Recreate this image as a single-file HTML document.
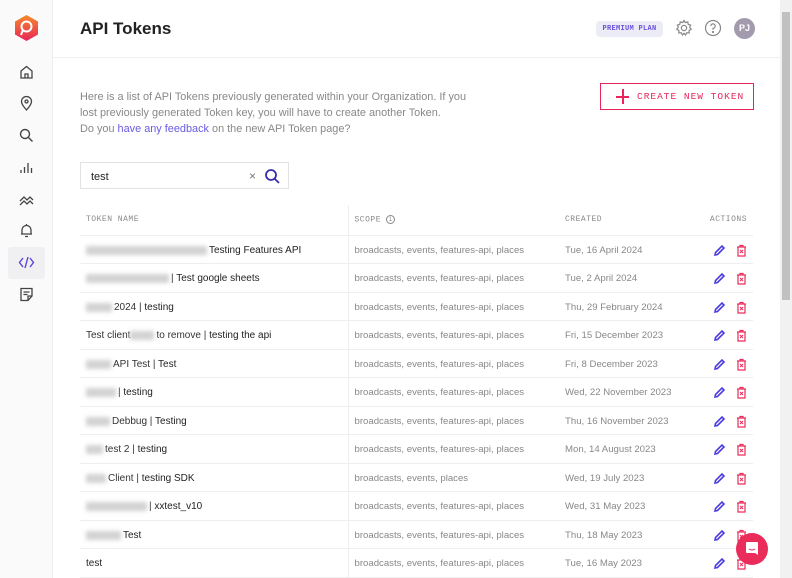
<!DOCTYPE html>
<html><head><style>
*{box-sizing:border-box;margin:0;padding:0}
body{width:792px;height:578px;overflow:hidden;font-family:"Liberation Sans",sans-serif;background:#fff;position:relative}
.side{position:absolute;left:0;top:0;width:53px;height:578px;background:#fafafa;border-right:1px solid #eee}
.ic{position:absolute;left:18px;width:17px;height:17px}
.main{position:absolute;left:53px;top:0;right:12px;height:578px}
.hdr{height:58px;border-bottom:1px solid #f0f0f0}
h1{position:absolute;left:27px;top:19px;font-size:17px;font-weight:600;color:#222}
.badge{position:absolute;left:543px;top:21px;width:67px;height:16px;background:#ececf6;border-radius:4px;font:bold 7px "Liberation Mono",monospace;color:#6a4fe0;text-align:center;line-height:16px;letter-spacing:.3px}
.av{position:absolute;left:681px;top:18px;width:21px;height:21px;border-radius:50%;background:#a39bad;color:#fff;font-size:9px;font-weight:bold;text-align:center;line-height:21px}
.intro{position:absolute;left:27px;top:89px;font-size:10.9px;line-height:16px;color:#888;width:394px}
.intro a{color:#6a5be0;text-decoration:none}
.btn{position:absolute;left:547px;top:83px;width:154px;height:27px;border:1.5px solid #e8245a;color:#e8245a;font:9.5px "Liberation Mono",monospace;letter-spacing:1px;line-height:25px;padding-left:36px;white-space:nowrap;overflow:hidden}
.btn:before{content:"";position:absolute;left:15px;top:12px;width:13px;height:1.5px;background:#e8245a}
.btn:after{content:"";position:absolute;left:21px;top:5px;width:1.5px;height:15px;background:#e8245a}
.search{position:absolute;left:27px;top:162px;width:209px;height:27px;border:1px solid #e2e2e2;font-size:11px;color:#222;padding:8px 10px}
table{position:absolute;left:27px;top:205px;width:673px;border-collapse:collapse;font-size:10px}
th{height:30px;font:8px "Liberation Mono",monospace;color:#888;text-align:left;padding-left:6px;border-bottom:1px solid #eee;letter-spacing:.5px}
td{height:28.5px;border-bottom:1px solid #eee;padding-left:6px;padding-top:2px;color:#333;white-space:nowrap}
td.s,td.c{color:#888;font-size:9.6px}
th.s,td.s{border-left:1px solid #eee}
.b{display:inline-block;height:9px;background:#d2d2d2;filter:blur(2px);vertical-align:middle;margin-right:2px}
.n{color:#222}
.act{text-align:right;padding-right:6px}
.scr{position:absolute;right:0;top:0;width:12px;height:578px;background:#f1f1f1}
.thumb{position:absolute;left:2px;top:12px;width:8px;height:288px;background:#c1c1c1}
.chat{position:absolute;left:736px;top:533px;width:32px;height:32px;border-radius:50%;background:#ea2c5b}
</style></head><body>
<div class="side">
<svg style="position:absolute;left:14px;top:14px" width="25" height="28" viewBox="0 0 25 28"><defs><linearGradient id="g" x1="0" y1="0" x2="0" y2="1"><stop offset="0" stop-color="#f58a2a"/><stop offset="1" stop-color="#e8245a"/></linearGradient></defs><polygon points="12.5,1 24,7.5 24,20.5 12.5,27 1,20.5 1,7.5" fill="url(#g)"/><circle cx="12.5" cy="12.5" r="5" fill="none" stroke="#fff" stroke-width="2"/><path d="M9 16 L7 21" stroke="#fff" stroke-width="2"/></svg>
<svg class="ic" style="top:64px" viewBox="0 0 17 17" fill="none" stroke="#444" stroke-width="1.3"><path d="M3 7 L8.5 2.5 14 7 V14 H3Z M7 14 V10 H10 V14"/></svg>
<svg class="ic" style="top:95px" viewBox="0 0 17 17" fill="none" stroke="#444" stroke-width="1.3"><path d="M8.5 15 C4 10 3.5 8 3.5 6.5 A5 5 0 0 1 13.5 6.5 C13.5 8 13 10 8.5 15Z"/><circle cx="8.5" cy="6.5" r="1.5"/></svg>
<svg class="ic" style="top:127px" viewBox="0 0 17 17" fill="none" stroke="#444" stroke-width="1.4"><circle cx="7" cy="7" r="4.5"/><path d="M10.5 10.5 L14.5 14.5"/></svg>
<svg class="ic" style="top:159px" viewBox="0 0 17 17" fill="none" stroke="#444" stroke-width="1.3"><path d="M3 14 V11 M6.5 14 V8 M10 14 V4 M13.5 14 V9"/></svg>
<svg class="ic" style="top:191px" viewBox="0 0 17 17" fill="none" stroke="#444" stroke-width="1.3"><path d="M2 10 L6 6 9 9 12 6 15 9 M2 14 L6 10 9 13 12 10 15 13"/></svg>
<svg class="ic" style="top:222px" viewBox="0 0 17 17" fill="none" stroke="#444" stroke-width="1.3"><path d="M4 12 V8 A4.5 4.5 0 0 1 13 8 V12 H14 M3 12 H14 M7 14.5 H10 M8.5 2 V3.5"/></svg>
<div style="position:absolute;left:8px;top:247px;width:37px;height:32px;background:#f0f0f3;border-radius:3px"></div>
<svg class="ic" style="top:254px" viewBox="0 0 17 17" fill="none" stroke="#5a43d8" stroke-width="1.4"><path d="M5 4 L1.5 8.5 5 13 M12 4 L15.5 8.5 12 13 M10 3 L7 14"/></svg>
<svg class="ic" style="top:286px" viewBox="0 0 17 17" fill="none" stroke="#444" stroke-width="1.3"><path d="M3 2.5 H14 V10 L10 14.5 H3Z M10 14.5 V10 H14 M5.5 6 H11.5 M5.5 8.5 H9.5"/></svg>
</div>
<div class="main">
<div class="hdr"></div>
<h1>API Tokens</h1>
<div class="badge">PREMIUM PLAN</div>
<svg style="position:absolute;left:622px;top:19px" width="18" height="18" viewBox="0 0 18 18" fill="none" stroke="#888" stroke-width="1.2"><circle cx="9" cy="9" r="2.6"/><path d="M9 1.5 L10.3 3.6 12.8 2.9 13.2 5.4 15.6 6 14.7 8.4 16.3 10.3 14.1 11.5 14.2 14 11.7 13.8 10.5 16 9 14.3 7.5 16 6.3 13.8 3.8 14 3.9 11.5 1.7 10.3 3.3 8.4 2.4 6 4.8 5.4 5.2 2.9 7.7 3.6Z"/></svg>
<svg style="position:absolute;left:651px;top:19px" width="18" height="18" viewBox="0 0 18 18" fill="none" stroke="#888" stroke-width="1.2"><circle cx="9" cy="9" r="7.5"/><path d="M6.8 7 A2.2 2.2 0 1 1 9 9.3 V10.8"/><circle cx="9" cy="13" r=".5" fill="#888"/></svg>
<div class="av">PJ</div>
<div class="intro">Here is a list of API Tokens previously generated within your Organization. If you lost previously generated Token key, you will have to create another Token.<br>Do you <a>have any feedback</a> on the new API Token page?</div>
<div class="btn">CREATE NEW TOKEN</div>
<div class="search">test<span style="position:absolute;left:168px;top:6px;color:#777;font-size:12px">×</span>
<svg style="position:absolute;left:183px;top:5px" width="17" height="17" viewBox="0 0 17 17" fill="none" stroke="#3a2fa8" stroke-width="1.8"><circle cx="7" cy="7" r="5"/><path d="M10.7 10.7 L15 15"/></svg></div>
<table>
<tr><th style="width:268px">TOKEN NAME</th><th class="s" style="width:211px">SCOPE <span style="display:inline-block;width:9px;height:9px;border:1px solid #888;border-radius:50%;vertical-align:middle;font-size:6px;text-align:center;line-height:7px">i</span></th><th>CREATED</th><th style="text-align:right;padding-right:6px">ACTIONS</th></tr>
<tr><td><span class="b" style="width:121px"></span><span class="n">Testing Features API</span></td><td class="s">broadcasts, events, features-api, places</td><td class="c">Tue, 16 April 2024</td><td class="act">A</td></tr>
<tr><td><span class="b" style="width:83px"></span>| <span class="n">Test google sheets</span></td><td class="s">broadcasts, events, features-api, places</td><td class="c">Tue, 2 April 2024</td><td class="act">A</td></tr>
<tr><td><span class="b" style="width:26px"></span>2024 | <span class="n">testing</span></td><td class="s">broadcasts, events, features-api, places</td><td class="c">Thu, 29 February 2024</td><td class="act">A</td></tr>
<tr><td>Test client<span class="b" style="width:24px"></span>to remove | <span class="n">testing the api</span></td><td class="s">broadcasts, events, features-api, places</td><td class="c">Fri, 15 December 2023</td><td class="act">A</td></tr>
<tr><td><span class="b" style="width:25px"></span>API Test | <span class="n">Test</span></td><td class="s">broadcasts, events, features-api, places</td><td class="c">Fri, 8 December 2023</td><td class="act">A</td></tr>
<tr><td><span class="b" style="width:30px"></span>| <span class="n">testing</span></td><td class="s">broadcasts, events, features-api, places</td><td class="c">Wed, 22 November 2023</td><td class="act">A</td></tr>
<tr><td><span class="b" style="width:24px"></span>Debbug | <span class="n">Testing</span></td><td class="s">broadcasts, events, features-api, places</td><td class="c">Thu, 16 November 2023</td><td class="act">A</td></tr>
<tr><td><span class="b" style="width:17px"></span>test 2 | <span class="n">testing</span></td><td class="s">broadcasts, events, features-api, places</td><td class="c">Mon, 14 August 2023</td><td class="act">A</td></tr>
<tr><td><span class="b" style="width:20px"></span>Client | <span class="n">testing SDK</span></td><td class="s">broadcasts, events, places</td><td class="c">Wed, 19 July 2023</td><td class="act">A</td></tr>
<tr><td><span class="b" style="width:61px"></span>| <span class="n">xxtest_v10</span></td><td class="s">broadcasts, events, features-api, places</td><td class="c">Wed, 31 May 2023</td><td class="act">A</td></tr>
<tr><td><span class="b" style="width:35px"></span><span class="n">Test</span></td><td class="s">broadcasts, events, features-api, places</td><td class="c">Thu, 18 May 2023</td><td class="act">A</td></tr>
<tr><td><span class="n">test</span></td><td class="s">broadcasts, events, features-api, places</td><td class="c">Tue, 16 May 2023</td><td class="act">A</td></tr>
</table>
</div>
<div class="scr"><div class="thumb"></div></div>
<div class="chat"><svg style="position:absolute;left:9px;top:8px" width="14" height="16" viewBox="0 0 14 16"><path d="M1 2 Q1 1 2 1 H12 Q13 1 13 2 V14 L10 12 H2 Q1 12 1 11Z" fill="#fff"/><path d="M4 8 Q7 10 10 8" stroke="#ea2c5b" fill="none" stroke-width="1"/></svg></div>
<script>
document.querySelectorAll('td.act').forEach(function(t){t.innerHTML='<svg width="13" height="13" viewBox="0 0 13 13" style="vertical-align:middle;margin-right:10px"><path d="M2 11 L2.5 8.5 9 2 11 4 4.5 10.5Z" fill="none" stroke="#4a3be0" stroke-width="1.6"/></svg><svg width="11" height="13" viewBox="0 0 11 13" style="vertical-align:middle"><path d="M1 3 H10 M4 3 V1.5 H7 V3 M2 3 V12 H9 V3" fill="none" stroke="#ea2c5b" stroke-width="1.2"/><path d="M4 6 L7 9 M7 6 L4 9" stroke="#ea2c5b" stroke-width="1"/></svg>';});
</script>
</body></html>
